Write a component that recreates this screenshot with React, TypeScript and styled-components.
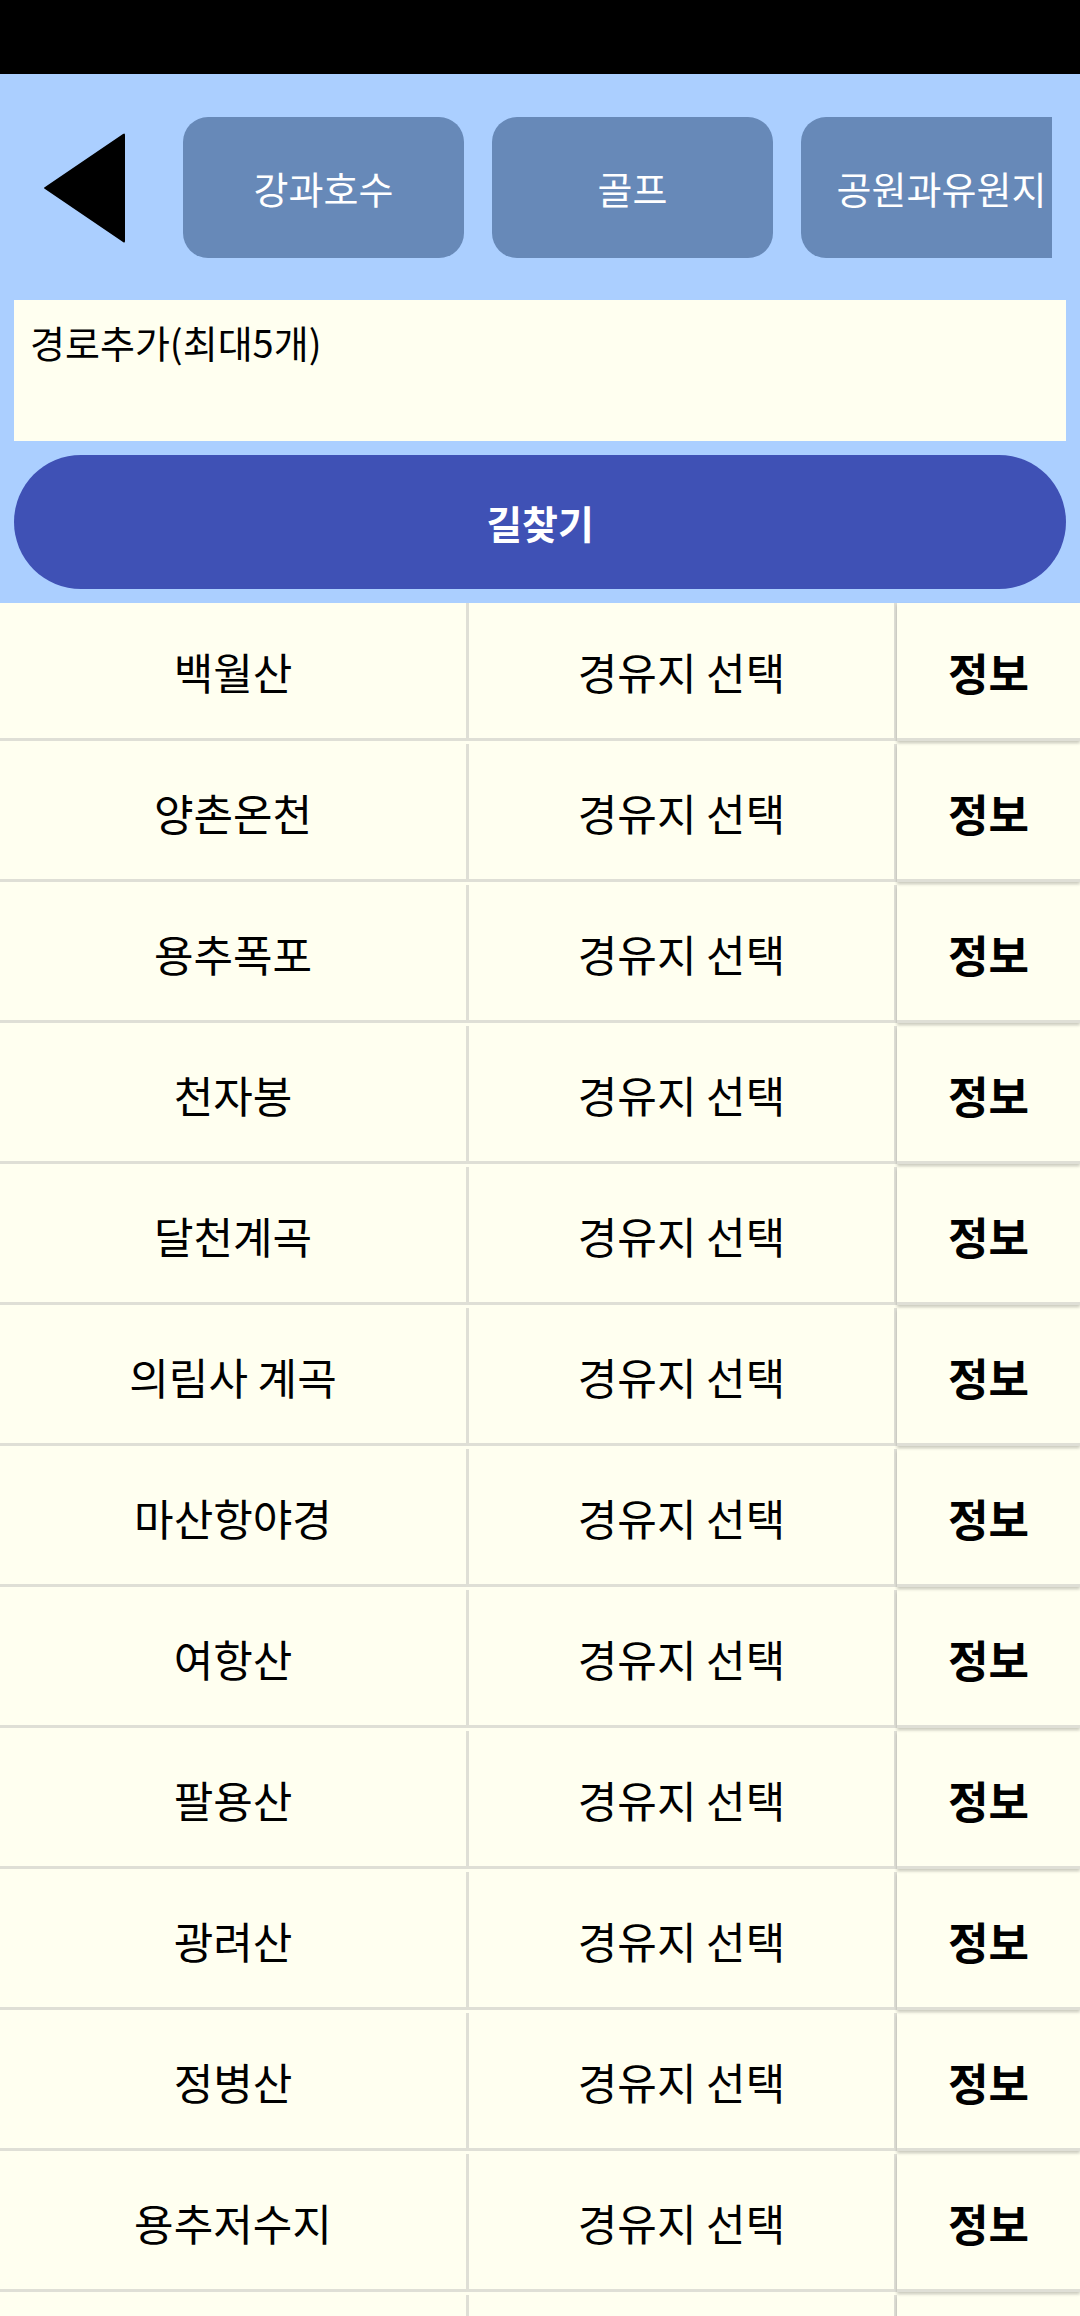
import { FC } from "react";
import styled, { createGlobalStyle } from "styled-components";

const GlobalStyle = createGlobalStyle`
  html, body {
    margin: 0;
    padding: 0;
    background: #fffff0;
  }
  body {
    font-family: "Noto Sans CJK KR", "Noto Sans", sans-serif;
    overflow: hidden;
  }
  * {
    box-sizing: border-box;
  }
`;

const places = [
  "백월산",
  "양촌온천",
  "용추폭포",
  "천자봉",
  "달천계곡",
  "의림사 계곡",
  "마산항야경",
  "여항산",
  "팔용산",
  "광려산",
  "정병산",
  "용추저수지",
];

const categories = ["강과호수", "골프", "공원과유원지"];

const StatusBar = styled.div`
  height: 74px;
  background: #000;
`;

const Header = styled.div`
  background: #abcfff;
  padding: 43px 14px 14px;
`;

const TopRow = styled.div`
  display: flex;
  align-items: center;
  height: 141px;
  margin: 0 0 42px -14px;
`;

const BackButton = styled.button`
  width: 183px;
  height: 141px;
  flex: none;
  border: 0;
  padding: 0 0 0 43px;
  background: transparent;
  display: flex;
  align-items: center;
`;

const CategoryScroll = styled.div`
  display: flex;
  gap: 28px;
  width: 869px;
  overflow: hidden;
`;

const CategoryButton = styled.div`
  flex: none;
  width: 281px;
  height: 141px;
  border-radius: 25px;
  background: #6789b8;
  color: #fff;
  font-size: 38px;
  display: flex;
  align-items: center;
  justify-content: center;
  white-space: nowrap;
  overflow: hidden;
`;

const RouteInput = styled.div`
  height: 141px;
  background: #fffff0;
  color: #000;
  font-size: 38px;
  line-height: 44px;
  padding: 20px 16px;
`;

const SearchButton = styled.div`
  margin-top: 14px;
  height: 134px;
  border-radius: 67px;
  background: #3f51b5;
  color: #fff;
  font-size: 39px;
  font-weight: 700;
  display: flex;
  align-items: center;
  justify-content: center;
`;

const List = styled.div`
  display: flex;
  flex-direction: column;
`;

const Row = styled.div`
  display: flex;
  height: 141px;
  padding-bottom: 3px;
  background: #fffff0;
`;

const RowInner = styled.div`
  display: flex;
  flex: 1;
  border-bottom: 3px solid #dfdfd6;
`;

const Cell = styled.div<{ $width?: number; $bold?: boolean }>`
  ${(p) => (p.$width ? `width: ${p.$width}px; flex: none;` : "flex: 1;")}
  display: flex;
  align-items: center;
  justify-content: center;
  font-size: ${(p) => (p.$bold ? 44 : 43)}px;
  font-weight: ${(p) => (p.$bold ? 700 : 400)};
  color: #000;
  white-space: nowrap;
`;

const InfoCell = styled(Cell)`
  position: relative;
  margin-bottom: -3px;
  box-shadow: 0 2px 3px rgba(0, 0, 0, 0.22);
`;

const Divider = styled.div`
  width: 3px;
  flex: none;
  background: #dfdfd6;
`;

const BackIcon: FC = () => (
  <svg width="84" height="114" viewBox="0 0 84 114">
    <path
      d="M80 3 Q82 1.5 82 4 L82 110 Q82 112.5 80 111 L2 58 Q0 57 2 56 Z"
      fill="#000"
    />
  </svg>
);

const App: FC = () => (
  <>
    <GlobalStyle />
    <StatusBar />
    <Header>
      <TopRow>
        <BackButton>
          <BackIcon />
        </BackButton>
        <CategoryScroll>
          {categories.map((c) => (
            <CategoryButton key={c}>{c}</CategoryButton>
          ))}
        </CategoryScroll>
      </TopRow>
      <RouteInput>경로추가(최대5개)</RouteInput>
      <SearchButton>길찾기</SearchButton>
    </Header>
    <List>
      {places.map((name) => (
        <Row key={name}>
          <RowInner>
            <Cell $width={466}>{name}</Cell>
            <Divider />
            <Cell $width={425}>경유지 선택</Cell>
            <Divider />
            <InfoCell $bold>정보</InfoCell>
          </RowInner>
        </Row>
      ))}
      <Row>
        <RowInner>
          <Cell $width={466} />
          <Divider />
          <Cell $width={425} />
          <Divider />
          <InfoCell />
        </RowInner>
      </Row>
    </List>
  </>
);

export default App;
